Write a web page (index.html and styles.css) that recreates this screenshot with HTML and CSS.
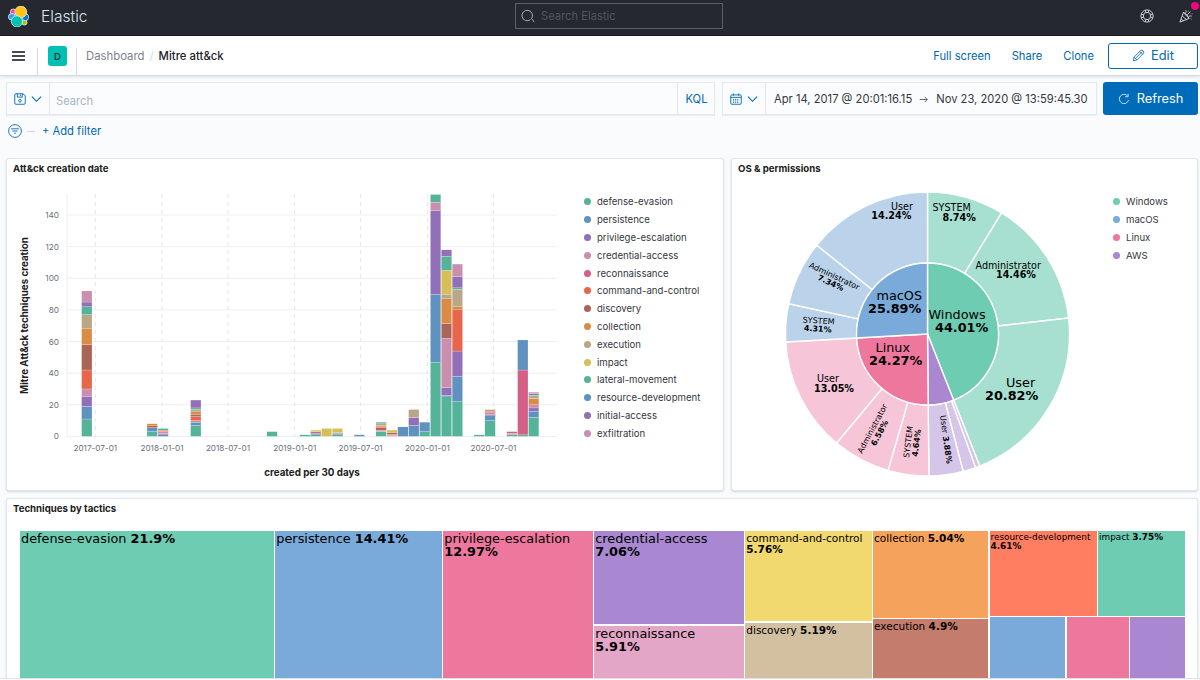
FILE: index.html
```
<!DOCTYPE html>
<html lang="en">
<head>
    <meta charset="UTF-8">
    <meta name="viewport" content="width=device-width, initial-scale=1.0">
    <title>Mitre att&amp;ck - Elastic</title>
    <link rel="stylesheet" href="styles.css">
</head>
<body>
    <header class="top-bar">
        <svg class="logo" viewBox="0 0 32 32">
            <g stroke="#fff" stroke-width="1">
                <circle cx="8" cy="9" r="4.5" fill="#f04e98"/>
                <ellipse cx="6" cy="16.5" rx="5.5" ry="5" fill="#36a2ef"/>
                <circle cx="25" cy="25" r="4" fill="#93c90e"/>
                <ellipse cx="26.5" cy="17" rx="5" ry="5.5" fill="#07c"/>
                <circle cx="19.5" cy="9" r="9" fill="#fec514"/>
                <circle cx="13.5" cy="23.5" r="8.5" fill="#00bfb3"/>
            </g>
        </svg>
        <span class="brand">Elastic</span>
        <div class="global-search">
            <svg viewBox="0 0 16 16"><path d="M10.8 12.2a6 6 0 1 1 1.3-1.4L15 15"/></svg>
            <span>Search Elastic</span>
        </div>
        <div class="top-icons">
            <svg viewBox="0 0 16 16"><circle cx="8" cy="8" r="7"/><circle cx="8" cy="8" r="4.2"/><path d="M5.8 1.4l.9 2.6M10.2 1.4L9.3 4M5.8 14.6l.9-2.6M10.2 14.6L9.3 12M1.4 5.8l2.6.9M1.4 10.2L4 9.3M14.6 5.8l-2.6.9M14.6 10.2L12 9.3"/></svg>
            <div class="news">
                <svg viewBox="0 0 16 16"><path d="M5 4L1 15l10.500-4.200zM3.700 8l4.600 4M2.500 11.500l2.500 2M5 4c2 .5 6 4 6.500 6.800M7.500 4.500c.8-1 .8-2 .2-3M9.500 6.500L13 3M11.500 8.500c1-.8 2-.8 3-.2M10.500 2v.8M14.500 5.500h.8M13.500 11l.8.6"/></svg>
                <i class="badge"></i>
            </div>
        </div>
    </header>

    <nav class="sub-bar">
        <div class="menu-btn"><i></i><i></i><i></i></div>
        <div class="space"><span>D</span></div>
        <div class="breadcrumbs">
            <span>Dashboard</span><i>/</i><b>Mitre att&amp;ck</b>
        </div>
        <div class="nav-links">
            <a>Full screen</a>
            <a>Share</a>
            <a>Clone</a>
            <button class="edit-btn">
                <svg viewBox="0 0 16 16"><path d="M1.500 14.500l1-4.500L11 1.500c1.200-1 4.400 2 3.500 3.500L6 13.500zM2.500 10L6 13.500M4 11.700l8.400-8.400M9.500 3l3.500 3.500"/></svg>
                Edit
            </button>
        </div>
    </nav>

    <section class="query-bar">
        <div class="query-box">
            <div class="picker">
                <svg viewBox="0 0 16 16"><path d="M2.500 1h9.500l3 2.500v10a1.500 1.500 0 0 1-1.500 1.500h-11A1.500 1.500 0 0 1 1 13.500v-11A1.500 1.500 0 0 1 2.500 1zM4.500 1v4.500h6.500V1M8.500 2v2"/><circle cx="8" cy="10.300" r="1.800"/></svg>
                <svg class="chevron" viewBox="0 0 12 8"><path d="M1 1.500l5 5 5-5"/></svg>
            </div>
            <span class="placeholder">Search</span>
            <span class="kql">KQL</span>
        </div>
        <div class="date-box">
            <div class="picker">
                <svg viewBox="0 0 16 16"><path d="M2.500 2.500h11A1.500 1.500 0 0 1 15 4v9.500a1.500 1.500 0 0 1-1.500 1.500h-11A1.500 1.500 0 0 1 1 13.500V4a1.500 1.500 0 0 1 1.500-1.500zM1 5.800h14M4.500 .5v3M11.500 .5v3"/><path stroke-dasharray="1.500 1.300" d="M4 8.500h8M4 10.500h8M4 12.500h8"/></svg>
                <svg class="chevron" viewBox="0 0 12 8"><path d="M1 1.500l5 5 5-5"/></svg>
            </div>
            <span class="date-from">Apr 14, 2017 @ 20:01:16.15</span>
            <svg class="arrow" viewBox="0 0 12 12"><path d="M1 6h10M7.500 2.500L11 6 7.500 9.500"/></svg>
            <span>Nov 23, 2020 @ 13:59:45.30</span>
        </div>
        <button class="refresh-btn">
            <svg viewBox="0 0 16 16"><path d="M12.800 4A6.200 6.200 0 1 0 14 9.500M13.500 1v4h-4"/></svg>
            Refresh
        </button>
    </section>

    <div class="filter-bar">
        <svg viewBox="0 0 16 16"><circle cx="8" cy="8" r="7.300"/><path d="M3.500 5.500h9M5 8h6M7 10.500h2"/></svg>
        <i class="dash"></i>
        <a>+ Add filter</a>
    </div>

    <main class="dashboard">
        <section class="panel">
            <h3>Att&amp;ck creation date</h3>
            <div class="panel-body">
                <svg id="barChart" width="569" height="308" viewBox="7 179 569 308"></svg>
                <ul class="legend" id="barLegend"></ul>
            </div>
        </section>

        <section class="panel">
            <h3>OS &amp; permissions</h3>
            <div class="panel-body">
                <svg id="pieChart" width="373" height="308" viewBox="732 179 373 308"></svg>
                <ul class="legend" id="pieLegend"></ul>
            </div>
        </section>

        <section class="panel wide">
            <h3>Techniques by tactics</h3>
            <div class="treemap">
                <div class="tile green">defense-evasion <b>21.9%</b></div>
                <div class="tile blue">persistence <b>14.41%</b></div>
                <div class="tile pink">privilege-escalation <b>12.97%</b></div>
                <div class="stack credential">
                    <div class="tile purple">credential-access <b>7.06%</b></div>
                    <div class="tile rose">reconnaissance<br><b>5.91%</b></div>
                </div>
                <div class="stack command">
                    <div class="tile yellow">command-and-control <b>5.76%</b></div>
                    <div class="tile tan">discovery <b>5.19%</b></div>
                </div>
                <div class="stack collection">
                    <div class="tile orange">collection <b>5.04%</b></div>
                    <div class="tile brown">execution <b>4.9%</b></div>
                </div>
                <div class="stack rest">
                    <div class="tile-row top">
                        <div class="tile red">resource-development <b>4.61%</b></div>
                        <div class="tile green">impact <b>3.75%</b></div>
                    </div>
                    <div class="tile-row bottom">
                        <div class="tile blue"></div>
                        <div class="tile pink"></div>
                        <div class="tile purple"></div>
                    </div>
                </div>
            </div>
        </section>
    </main>
    <footer class="bottom-edge"></footer>

    <script src="charts.js"></script>
</body>
</html>
```
FILE: styles.css
```
* {
    box-sizing: border-box;
}
body {
    margin: 0;
    height: 680px;
    overflow: hidden;
    display: flex;
    flex-direction: column;
    background-color: #fafbfd;
    color: #343741;
    font-family: Inter, "Liberation Sans", sans-serif;
    font-size: 11.2px;
}
svg {
    fill: none;
    stroke: currentColor;
    flex: none;
}
button {
    font-family: inherit;
    display: flex;
    align-items: center;
    justify-content: center;
    border-radius: 3px;
}

/* Dark header */
.top-bar {
    height: 36px;
    flex: none;
    display: flex;
    align-items: center;
    background-color: #25282f;
    border-bottom: 1px solid #15171c;
    padding: 0 8px 3px 8px;
    color: #dfe5ef;
}
.logo {
    width: 21px;
    height: 21px;
}
.brand {
    width: 474px;
    margin-left: 12px;
    padding-top: 1px;
    font-size: 15.6px;
    font-weight: 300;
}
.global-search {
    width: 208px;
    height: 26px;
    display: flex;
    align-items: center;
    gap: 6px;
    padding-left: 5px;
    border: 1px solid #5a5f69;
    color: #51555e;
    font-size: 11.2px;
}
.global-search svg {
    width: 14px;
    height: 14px;
    color: #b5bac4;
}
.top-icons {
    display: flex;
    gap: 25px;
    margin-left: auto;
    margin-right: -1px;
}
.top-icons svg {
    display: block;
    width: 14px;
    height: 14px;
}
.news {
    position: relative;
}
.badge {
    position: absolute;
    top: -7px;
    right: -6px;
    width: 8px;
    height: 8px;
    border-radius: 50%;
    background-color: #f0047f;
}

/* Breadcrumb row */
.sub-bar {
    height: 40px;
    flex: none;
    display: flex;
    align-items: center;
    background-color: #fff;
    border-bottom: 1px solid #d3dae6;
    box-shadow: 0 1px 3px rgba(100,110,140,0.2);
}
.menu-btn {
    width: 38px;
    height: 27px;
    align-self: flex-end;
    display: flex;
    flex-direction: column;
    gap: 2px;
    padding: 3px 0 0 12px;
    border-right: 1px solid #d3dae6;
}
.menu-btn i {
    width: 13px;
    height: 2px;
    background-color: #494c56;
}
.space {
    width: 39px;
    height: 27px;
    align-self: flex-end;
    padding-left: 10px;
    border-right: 1px solid #d3dae6;
}
.space span {
    display: block;
    width: 19px;
    height: 20px;
    margin-top: -2px;
    border-radius: 3px;
    background-color: #00bfb3;
    color: #10383a;
    font-size: 9.6px;
    font-weight: 600;
    line-height: 21px;
    text-align: center;
}
.breadcrumbs {
    margin-left: 9px;
    font-size: 11.35px;
    color: #7c828e;
}
.breadcrumbs i {
    margin: 0 5px;
    color: #d3dae6;
    font-style: normal;
}
.breadcrumbs b {
    font-weight: 500;
    color: #1f222a;
}
.nav-links {
    display: flex;
    align-items: center;
    gap: 21px;
    margin-left: auto;
    margin-right: 2px;
    font-size: 11.2px;
    color: #0068b3;
}
.edit-btn {
    width: 90px;
    height: 26px;
    margin-left: -7px;
    gap: 6px;
    background-color: #fff;
    border: 1px solid #0068b3;
    color: #0068b3;
    font-size: 12.8px;
}
.edit-btn svg {
    width: 13px;
    height: 13px;
}

/* Query input, time range and refresh */
.query-bar {
    display: flex;
    height: 33px;
    flex: none;
    margin: 6px 2px 0 6px;
}
.query-box,
.date-box {
    display: flex;
    align-items: center;
    background-color: #fbfcfd;
    border: 1px solid #e3e8f1;
    box-shadow: 0 1px 1px rgba(150,160,180,0.15);
}
.query-box {
    width: 709px;
}
.date-box {
    width: 375px;
    margin-left: 7px;
    font-size: 11.2px;
}
.picker {
    display: flex;
    align-items: center;
    align-self: stretch;
    gap: 5px;
    width: 43px;
    padding-left: 7px;
    color: #0068b3;
    border-right: 1px solid #e3e8f1;
}
.picker svg {
    width: 12px;
    height: 12px;
    stroke-width: 1.2;
}
.picker svg.chevron {
    width: 11px;
    height: 8px;
}
.placeholder {
    flex-grow: 1;
    padding: 4px 0 0 6px;
    font-size: 11.2px;
    color: #abb4c4;
}
.kql {
    align-self: stretch;
    width: 37px;
    padding-left: 1px;
    line-height: 32px;
    text-align: center;
    border-left: 1px solid #e3e8f1;
    color: #0068b3;
}
.date-from {
    margin-left: 8px;
}
.arrow {
    width: 9px;
    height: 9px;
    margin: 2px 8px 0 7px;
}
.refresh-btn {
    flex-grow: 1;
    margin-left: 6px;
    gap: 7px;
    padding: 0;
    border: none;
    background-color: #006bb8;
    color: #fff;
    font-size: 12.8px;
}
.refresh-btn svg {
    width: 12px;
    height: 12px;
}

.filter-bar {
    display: flex;
    align-items: center;
    flex: none;
    height: 34px;
    padding: 0 0 2px 8px;
    color: #0068b3;
    font-size: 11.2px;
}
.filter-bar svg {
    width: 14px;
    height: 14px;
}
.dash {
    width: 8px;
    height: 1px;
    margin: 0 7px 0 5px;
    background-color: #d3dae6;
}

/* Panels */
.dashboard {
    display: grid;
    grid-template-columns: 718px 467px;
    grid-template-rows: 333px 190px;
    gap: 7px;
    margin: 9px 0 0 6px;
}
.panel {
    background-color: #fff;
    border: 1px solid #e0e5ee;
    border-radius: 3px;
    box-shadow: 0 1px 2px rgba(100,110,140,0.25);
    overflow: hidden;
}
.panel.wide {
    grid-column: 1 / 3;
}
.panel h3 {
    height: 20px;
    margin: 0;
    padding-left: 6px;
    line-height: 20px;
    font-size: 9.65px;
    font-weight: 700;
    color: #1a1c21;
}
.panel-body {
    display: flex;
}
.legend {
    list-style: none;
    margin: 14px 0 0;
    padding: 0;
    font-size: 9.6px;
}
.legend li {
    display: flex;
    align-items: center;
    gap: 6px;
    height: 17.8px;
    padding-left: 8px;
}
.legend li i {
    width: 7px;
    height: 7px;
    border-radius: 50%;
}

/* Chart text */
.grid-line {
    stroke: #eceff4;
}
.tick-line {
    stroke: #e4e7ed;
    stroke-dasharray: 4 4;
}
.tick {
    fill: #69707d;
    stroke: none;
    font-size: 8.2px;
}
.axis-title {
    fill: #1a1c21;
    stroke: none;
    font-size: 9.8px;
    font-weight: 700;
    text-anchor: middle;
}
.slice-label {
    fill: #000;
    stroke: none;
    font-family: "DejaVu Sans", sans-serif;
}
.slice-label.value {
    font-weight: 700;
}

/* Treemap */
.treemap {
    display: grid;
    grid-template-columns: 253.8px 166.5px 149.5px 149.5px 126.3px 115px 195px;
    gap: 1.5px;
    height: 196px;
    margin: 12px 0 0 13px;
    font-family: "DejaVu Sans", sans-serif;
    font-size: 12.85px;
    line-height: 13px;
    color: #000;
}
.tile {
    padding: 1px;
}
.stack {
    display: grid;
    gap: 1.5px;
}
.stack.credential {
    grid-template-rows: 93px 1fr;
}
.stack.command {
    grid-template-rows: 90px 1fr;
    font-size: 10.5px;
    line-height: 10.5px;
}
.stack.collection {
    grid-template-rows: 86.5px 1fr;
    font-size: 10.5px;
    line-height: 10.5px;
}
.stack.command .tile,
.stack.collection .tile {
    padding-top: 2px;
}
.stack.rest {
    grid-template-rows: 84.5px 1fr;
    font-size: 8.85px;
    line-height: 9px;
}
.stack.rest .tile {
    padding-top: 2px;
}
.tile-row {
    display: grid;
    gap: 1.5px;
}
.tile-row.top {
    grid-template-columns: 107px 1fr;
}
.tile-row.bottom {
    grid-template-columns: 75.5px 62px 1fr;
}
.green { background-color: #6dccb1; }
.blue { background-color: #79aad9; }
.pink { background-color: #ee789d; }
.purple { background-color: #a987d1; }
.rose { background-color: #e4a6c7; }
.yellow { background-color: #f1d86f; }
.tan { background-color: #d2c0a0; }
.orange { background-color: #f5a35c; }
.brown { background-color: #c47c6c; }
.red { background-color: #ff7e62; }

.bottom-edge {
    position: absolute;
    left: 0;
    right: 0;
    top: 678px;
    height: 2px;
    background-color: #fff;
    border-top: 1px solid #dde2ea;
}
```
FILE: charts.js
```
const SVG_NS = 'http://www.w3.org/2000/svg';

const tactics = [
    ['defense-evasion', '#54b399'],
    ['persistence', '#6092c0'],
    ['privilege-escalation', '#9170b8'],
    ['credential-access', '#ca8eae'],
    ['reconnaissance', '#d36086'],
    ['command-and-control', '#e7664c'],
    ['discovery', '#aa6556'],
    ['collection', '#da8b45'],
    ['execution', '#b9a888'],
    ['impact', '#d6bf57'],
    ['lateral-movement', '#54b399'],
    ['resource-development', '#6092c0'],
    ['initial-access', '#9170b8'],
    ['exfiltration', '#ca8eae']
];

// bucket index -> [tactic index, count] from the bottom up
const buckets = {
    0: [[0, 11], [1, 8], [2, 6], [3, 5], [5, 12], [6, 16], [7, 10.5], [8, 8.5], [10, 5], [12, 3], [13, 7]],
    6: [[0, 3], [1, 2.5], [6, 1.2], [7, 1.3]],
    7: [[1, 1], [2, 0.7], [3, 1.3], [7, 1], [10, 1]],
    10: [[0, 7], [1, 2], [3, 1], [5, 2.5], [6, 1.5], [7, 1.5], [8, 1.5], [10, 1], [12, 5]],
    17: [[0, 3]],
    20: [[0, 1]],
    21: [[0, 1], [1, 1], [4, 1], [9, 1]],
    22: [[9, 5]],
    23: [[0, 1], [1, 1], [7, 0.5], [9, 2.5]],
    25: [[1, 1]],
    27: [[0, 3], [3, 1], [6, 1.5], [5, 0.5], [7, 1], [8, 1], [10, 1]],
    28: [[3, 0.7], [4, 0.6], [6, 0.9], [9, 1.8]],
    29: [[1, 6]],
    30: [[1, 7], [2, 5], [8, 5]],
    31: [[0, 3], [1, 6]],
    32: [[0, 47], [1, 43], [2, 53], [3, 5], [10, 5]],
    33: [[0, 25], [1, 1], [2, 5], [3, 31], [6, 9.5], [7, 15.5], [8, 3], [9, 15], [10, 9], [12, 4]],
    34: [[0, 22], [1, 16], [2, 16], [5, 26], [7, 2], [8, 11], [10, 1], [12, 7], [13, 8]],
    36: [[0, 1]],
    37: [[0, 10], [1, 3], [2, 1], [3, 1], [5, 1], [8, 1]],
    39: [[0, 1], [3, 1], [4, 1]],
    40: [[0, 1], [4, 41], [1, 19]],
    41: [[0, 12], [1, 4], [2, 2], [3, 2], [7, 4], [8, 2], [1, 1], [13, 1]]
};

function add(parent, tag, attrs, text) {
    const el = document.createElementNS(SVG_NS, tag);
    for (const key in attrs) {
        el.setAttribute(key, attrs[key]);
    }
    if (text) {
        el.textContent = text;
    }
    parent.appendChild(el);
    return el;
}

function fillLegend(id, items) {
    const list = document.getElementById(id);
    items.forEach(([name, color]) => {
        const li = document.createElement('li');
        const dot = document.createElement('i');
        dot.style.backgroundColor = color;
        li.append(dot, name);
        list.appendChild(li);
    });
}

function drawBars() {
    const svg = document.getElementById('barChart');
    const base = 436.4;
    const unit = 1.581;

    for (let v = 0; v <= 140; v += 20) {
        const y = base - v * unit;
        add(svg, 'line', { class: 'grid-line', x1: 67, x2: 557, y1: y, y2: y });
        add(svg, 'text', { class: 'tick', x: 59, y: y + 3, 'text-anchor': 'end' }, String(v));
    }
    add(svg, 'line', { class: 'grid-line', x1: 67, x2: 67, y1: 194, y2: base });

    const dates = ['2017-07-01', '2018-01-01', '2018-07-01', '2019-01-01', '2019-07-01', '2020-01-01', '2020-07-01'];
    const ticks = [95.3, 162, 228, 294.7, 360.6, 427.3, 493.4];
    dates.forEach((date, i) => {
        add(svg, 'line', { class: 'tick-line', x1: ticks[i], x2: ticks[i], y1: 194, y2: base });
        add(svg, 'text', { class: 'tick', x: ticks[i], y: 451, 'text-anchor': 'middle' }, date);
    });

    for (const index in buckets) {
        let total = 0;
        buckets[index].forEach(([tactic, count]) => {
            total += count;
            add(svg, 'rect', {
                x: 81.6 + index * 10.9,
                y: base - total * unit,
                width: 10.4,
                height: count * unit,
                fill: tactics[tactic][1],
                stroke: '#fff',
                'stroke-width': 0.2
            });
        });
    }

    add(svg, 'text', { class: 'axis-title', x: 312, y: 475.5 }, 'created per 30 days');
    add(svg, 'text', { class: 'axis-title', transform: 'translate(27.500 315.500) rotate(-90)' }, 'Mitre Att&ck techniques creation');
}

const systems = [
    { name: 'Windows', color: '#6dccb1', light: '#a7e0d0', share: 44.01, parts: [8.74, 14.46, 20.81] },
    { name: 'AWS', color: '#a987d1', light: '#d5c5e8', share: 5.83, parts: [0.5, 1.45, 3.88] },
    { name: 'Linux', color: '#ee789d', light: '#f6c5d7', share: 24.27, parts: [4.64, 6.58, 13.05] },
    { name: 'macOS', color: '#79aad9', light: '#bad2ea', share: 25.89, parts: [4.31, 7.34, 14.24] }
];

// text, x, y, size, rotation, bold
const labels = [
    ['Windows', 928.5, 318.5, 12.8, 0], ['44.01%', 935, 331.5, 12.8, 0, 1],
    ['macOS', 876.5, 300, 12.8, 0], ['25.89%', 868, 313, 12.8, 0, 1],
    ['Linux', 875.5, 351.7, 12.8, 0], ['24.27%', 869, 364.7, 12.8, 0, 1],
    ['SYSTEM', 932.5, 211, 9.6, 0], ['8.74%', 942.5, 220.7, 9.6, 0, 1],
    ['Administrator', 975.5, 268.5, 9.6, 0], ['14.46%', 996, 278, 9.6, 0, 1],
    ['User', 1006, 387, 12.8, 0], ['20.82%', 985, 400, 12.8, 0, 1],
    ['User', 891, 209.5, 9.6, 0], ['14.24%', 871.3, 219, 9.6, 0, 1],
    ['User', 817, 382.3, 9.6, 0], ['13.05%', 814, 392, 9.6, 0, 1],
    ['Administrator', 808.5, 267, 8, 25], ['7.34%', 817, 279.5, 8, 25, 1],
    ['SYSTEM', 802.5, 322.5, 8, 3.5], ['4.31%', 803.7, 330.7, 8, 3.5, 1],
    ['Administrator', 862, 454, 8, -62], ['6.58%', 875.5, 446.5, 8, -62, 1],
    ['SYSTEM', 909, 458, 8, -83], ['4.64%', 917.5, 457, 8, -83, 1],
    ['User', 940, 415.5, 8, 82], ['3.88%', 942.8, 436.5, 8, 82, 1]
];

function drawPie() {
    const svg = document.getElementById('pieChart');
    const cx = 927.5, cy = 334, r = 71;

    function point(share, radius) {
        const a = share / 100 * 2 * Math.PI;
        return (cx + radius * Math.sin(a)) + ' ' + (cy - radius * Math.cos(a));
    }
    function slice(from, to, r0, r1, fill) {
        const d = `M${point(from, r0)}L${point(from, r1)}A${r1} ${r1} 0 0 1 ${point(to, r1)}` +
            `L${point(to, r0)}A${r0} ${r0} 0 0 0 ${point(from, r0)}Z`;
        add(svg, 'path', { d, fill, stroke: '#fff', 'stroke-width': 1.4 });
    }

    let start = 0;
    systems.forEach(system => {
        let from = start;
        system.parts.forEach(part => {
            slice(from, from + part, r, r * 2, system.light);
            from += part;
        });
        slice(start, start + system.share, 0, r, system.color);
        start += system.share;
    });

    labels.forEach(([text, x, y, size, rotation, bold]) => {
        add(svg, 'text', {
            class: bold ? 'slice-label value' : 'slice-label',
            'font-size': size,
            transform: `translate(${x} ${y}) rotate(${rotation})`
        }, text);
    });
}

fillLegend('barLegend', tactics);
fillLegend('pieLegend', [0, 3, 2, 1].map(i => [systems[i].name, systems[i].color]));
drawBars();
drawPie();
```
